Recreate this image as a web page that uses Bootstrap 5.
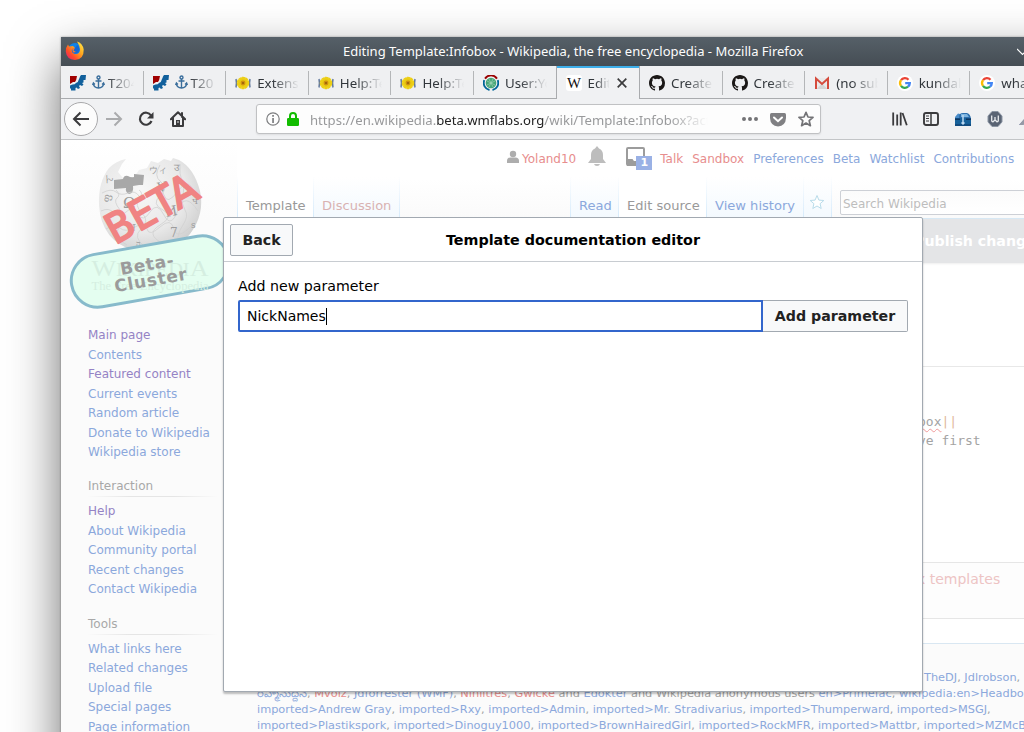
<!DOCTYPE html>
<html lang="en">
<head>
<meta charset="utf-8">
<title>Editing Template:Infobox - Wikipedia, the free encyclopedia</title>
<link rel="stylesheet" href="https://cdn.jsdelivr.net/npm/bootstrap@5.3.0/dist/css/bootstrap.min.css">
<style>
body{width:1024px;height:732px;overflow:hidden;background:#fff;padding:37px 0 0 61px;font-family:"DejaVu Sans",sans-serif;font-size:12px;line-height:1.2;color:#a0a0a0}
svg{display:block;flex:none}
.win{width:1100px;height:900px;background:#fff;box-shadow:0 22px 48px 0 rgba(0,0,0,.58),0 0 2px rgba(0,0,0,.35)}
.chrome{font-family:"Noto Sans",sans-serif;font-size:13.33px;color:#31363b;white-space:nowrap}
.titlebar{height:29px;background:linear-gradient(#566068,#454d54);color:#fcfcfc;padding-left:4px}
.titletext{width:460px;margin:0 0 0 258px;font-size:13px}
.tabstrip{height:33px;background:#eff0f2}
.btab{width:82.6px;flex:none;border-bottom:1px solid #a9abae;padding:1px 0 0 9px;position:relative}
.btab:not(.on):after{content:"";position:absolute;right:0;top:5px;height:24px;width:1px;background:#b4b6b8}
.btab.on:after,.btab.pre:after{display:none}
.btab.on{border:1px solid #a9abae;border-width:0 1px;box-shadow:inset 0 2px #3daee9;background:#f0f1f3;padding-left:9px;width:84.4px;margin-left:-1px}
.btxt{margin-left:6px;width:43px;overflow:hidden;-webkit-mask-image:linear-gradient(90deg,#000 35%,transparent 98%);mask-image:linear-gradient(90deg,#000 35%,transparent 98%)}
.toolbar{height:41px;background:#f0f1f3;border-bottom:1px solid #c3c5c7;padding-left:3px}
.backbtn{width:34px;height:34px;border:1px solid #a9a9ab;border-radius:50%;background:#fcfcfc}
.urlbar{width:565px;height:30px;margin-left:70px;background:#fdfdfd;border:1px solid #c0c1c3;border-radius:3px;padding-left:9px;box-shadow:0 1px 2px rgba(0,0,0,.08)}
.urltext{width:398px;margin:3px 0 0 11px;font-size:13.13px;overflow:hidden;color:#98999b;-webkit-mask-image:linear-gradient(90deg,#000 90%,transparent);mask-image:linear-gradient(90deg,#000 90%,transparent)}
.urltext b{font-weight:400;color:#222}
.wiki{height:760px;background:#fbfbfb}
.side{width:176px;flex:none;background:linear-gradient(#fff,#fbfbfb 80px)}
.side ul{list-style:none;margin:0 0 0 27px;padding:0}
.side li{height:19.5px;line-height:19.5px;white-space:nowrap;color:#8ba8dc}
.side li.vis{color:#9583c5}
.side h3{font-size:12px;font-weight:400;margin:13px 20px 5.5px 27px;height:21px;line-height:21px;border-bottom:1px solid;border-image:linear-gradient(90deg,#fbfbfb,#e5e5e5 33%,#e5e5e5 66%,#fbfbfb) 1;color:#a8a8a8}
.pagehead{height:78px;background:linear-gradient(#fff 50%,#fafafa)}
.personal{height:37px;padding:1px 0 0 269px;white-space:nowrap;color:#8ba8dc}
.red{color:#e78d8d!important}.pred{color:#d9b2b2!important}.grey{color:#999!important}
.counter{position:absolute;left:10px;top:9px;width:16px;height:14px;background:#9ab1e5;color:#fff;font-weight:700;font-size:11px;line-height:14px;text-align:center}
.vtabs{height:41px;font-size:13.05px;color:#8ba8dc;white-space:nowrap}
.vtab{height:41px;padding:21px 0 0 8px;border-right:1px solid;border-image:linear-gradient(#fff,#d5eafb) 1;background:linear-gradient(#fff,#f3f9fe)}
.vtab.sel{background:linear-gradient(#fff,#fff)}
.search{width:220px;height:25px;border:1px solid #cdd0d6;border-radius:2px;margin:13px 0 0 8px;padding-left:2px;font-size:12px;line-height:26px;color:#bdbdbd;background:linear-gradient(#fbfbfb,#fff)}
.content{height:426px;background:#fff;border-top:1px solid #d6e8f5;border-bottom:1px solid #d9e7f2}
.savebar{height:44px;background:#e4e5e7;color:#fff;font-size:14.2px;font-weight:700;padding-left:677px;line-height:44px;white-space:nowrap;box-shadow:0 1px 2px #eee}
.summaryrow{height:104px;border-bottom:1px solid #e8e8e8}
.code{height:196px;border-bottom:1px solid #e6e6e6;padding:45px 0 0 681px;font:13px/19px "DejaVu Sans Mono",monospace;color:#a3a3a3}
.squig{text-decoration:underline wavy #f09a9a 1px;text-underline-offset:2px}
.tmpl{height:56px;background:#fdfdfd;border-bottom:1px solid #e6e6e6;padding:8px 0 0 680px;font-size:14px;color:#edc4c4}
.foot{padding:25px 0 0 20px;font-size:11.33px;line-height:16px;color:#8ba8dc;white-space:nowrap}
.foot i{font-style:normal;color:#a0a0a0}
.dlg{position:absolute;left:223px;top:217px;width:700px;height:475px;background:#fff;border:1px solid #a2a9b1;border-radius:2px;box-shadow:0 2px 2px rgba(0,0,0,.25);color:#000;font-size:14.2px}
.dlghead{height:44px;border-bottom:1px solid #c8ccd1;padding:0 6px}
.dlgtitle{padding:2px 63px 0 0;font-size:14.3px}
.obtn{height:32px;border:1px solid #a2a9b1;border-radius:2px;background:#f8f9fa;color:#222;font-size:14.2px;font-weight:700;line-height:30px;text-align:center;padding:0}
.field{width:525px;height:32px;border:2px solid #36c;border-radius:2px 0 0 2px;padding-left:7px;line-height:28px;font-size:14px}
.caret{width:1px;height:17px;background:#000}
</style>
</head>
<body>
<svg width="0" height="0" style="position:absolute">
<defs>
<g id="cog"><path d="M0 1h7Q6.500 5 5 7H3L0 9z" fill="#a00000"/><path d="M16 0 15.500 5H13.500V7.500L12 8 13.500 9.500 12 11 10 10 9 11 10 13 8 14 6.500 12.500 5.500 13V15.500H1V13.500H0V10.500L2.500 9.500Q5 9.500 6 8 8.500 7 9 4 9.500 3 10 1.500L11 0z" fill="#11609c"/></g>
<g id="flower"><path d="M1 4Q2 8 1 12.500M15 4Q14 8 15 12.500" stroke="#61789d" stroke-width="1.500" fill="none"/><circle cx="8" cy="8" r="5" fill="#e8c812"/><circle cx="8" cy="8" r="5" fill="none" stroke="#edcf16" stroke-width="2.500" stroke-dasharray="2.900 .25"/><circle cx="8" cy="8" r="2.400" fill="#d0900f"/><circle cx="8" cy="8" r="1" fill="#905c08"/></g>
<path id="octo" fill="#1b1817" d="M8 0C3.580 0 0 3.580 0 8c0 3.540 2.290 6.530 5.470 7.590.4.070.55-.17.55-.38v-1.490c-2.010.37-2.530-.49-2.690-.94-.09-.23-.48-.94-.82-1.130-.28-.15-.68-.52-.01-.53.63-.01 1.080.58 1.230.82.72 1.210 1.870.87 2.330.66.07-.52.28-.87.51-1.070-1.780-.2-3.640-.89-3.640-3.950 0-.87.31-1.590.82-2.150-.08-.2-.36-1.020.08-2.120 0 0 .67-.21 2.200.82a7.600 7.600 0 0 1 4 0c1.530-1.040 2.200-.82 2.200-.82.44 1.100.16 1.920.08 2.120.51.56.82 1.270.82 2.150 0 3.070-1.870 3.750-3.650 3.950.29.25.54.73.54 1.480v2.200c0 .21.15.46.55.38A8 8 0 0 0 16 8c0-4.420-3.580-8-8-8z"/>
<g id="goog"><circle cx="8" cy="8" r="8" fill="#fff"/><g fill="none" stroke-width="2.300"><path d="M4 5.200A4.800 4.800 0 0 1 11.500 4.700" stroke="#ea4335"/><path d="M4 5.200A4.800 4.800 0 0 0 4 10.800" stroke="#fbbc05"/><path d="M4 10.800A4.800 4.800 0 0 0 11 11.700" stroke="#34a853"/><path d="M11 11.700A4.800 4.800 0 0 0 12.800 8.100H8.200" stroke="#4285f4"/></g></g>
<g id="anchor" fill="none" stroke="#3a6e9c" stroke-width="1.400"><circle cx="6.500" cy="2.500" r="1.500"/><path d="M6.500 4V13M3.500 6h6M1.300 8.500Q1.800 12.700 6.500 13 11.200 12.700 11.700 8.500M.5 10 1.400 8l1.500 1.600M12.500 10 11.600 8l-1.500 1.600"/></g>
</defs></svg>
<div class="win">
 <div class="chrome">
  <div class="titlebar d-flex align-items-center">
   <svg width="20" height="20" viewBox="0 0 20 20" style="margin-top:-2px"><defs><linearGradient id="fx" x1="1" y1="0" x2="0" y2="1"><stop offset="0" stop-color="#fff44f"/><stop offset=".4" stop-color="#ffa61e"/><stop offset=".7" stop-color="#ff4b28"/><stop offset="1" stop-color="#e31587"/></linearGradient></defs><circle cx="10" cy="9" r="7" fill="#1183e8"/><path d="M12 .5Q17.500 2 18.700 8.500 19 18.500 10 19 1.500 18.500 .8 10.500.8 6 3 3.500L4 5.500 8 5 10 7 7.500 9Q7 13 11 13 14.500 13 15 9 15 5 12 .5z" fill="url(#fx)"/><path d="M7 8Q6 12 9.500 12.500 14 12.500 14.500 8 14 5 12 4 11 7 7 8z" fill="#1767d2"/><path d="M7 7.500 10 7 8.500 9.500 11 11 8 11.500z" fill="#ff7a24"/></svg>
   <div class="titletext">Editing Template:Infobox - Wikipedia, the free encyclopedia - Mozilla Firefox</div>
   <svg width="12" height="8" style="margin-left:214px"><path d="M0 1 5.500 6.500 11 1" fill="none" stroke="#fcfcfc" stroke-width="1.200"/></svg>
  </div>
  <div class="tabstrip d-flex">
   <div class="btab d-flex align-items-center"><svg width="16" height="16"><use href="#cog"/></svg><div class="btxt d-flex align-items-center"><svg width="13" height="14" style="margin-right:3px"><use href="#anchor"/></svg>T204</div></div>
   <div class="btab d-flex align-items-center"><svg width="16" height="16"><use href="#cog"/></svg><div class="btxt d-flex align-items-center"><svg width="13" height="14" style="margin-right:3px"><use href="#anchor"/></svg>T20</div></div>
   <div class="btab d-flex align-items-center"><svg width="16" height="16"><use href="#flower"/></svg><div class="btxt">Extensi</div></div>
   <div class="btab d-flex align-items-center"><svg width="16" height="16"><use href="#flower"/></svg><div class="btxt">Help:Te</div></div>
   <div class="btab d-flex align-items-center"><svg width="16" height="16"><use href="#flower"/></svg><div class="btxt">Help:Te</div></div>
   <div class="btab pre d-flex align-items-center"><svg width="16" height="16"><circle cx="8" cy="8" r="5.300" fill="#48a678"/><path d="M4 6l8 4M4 10l8-4M6 4l4 8M10 4 6 12" stroke="#a9d8bd" stroke-width=".6"/><path d="M2 3.600A7.200 7.200 0 0 1 14 3.600" fill="none" stroke="#990000" stroke-width="1.900"/><path d="M1.300 5.200A7.200 7.200 0 0 0 6.500 15M14.700 5.200A7.200 7.200 0 0 1 9.500 15" fill="none" stroke="#006699" stroke-width="1.900"/></svg><div class="btxt">User:Yo</div></div>
   <div class="btab on d-flex align-items-center"><svg width="16" height="16"><rect width="16" height="16" rx="3" fill="#fff"/><text x="8" y="13" text-anchor="middle" textLength="14" lengthAdjust="spacingAndGlyphs" font-family="Liberation Serif" font-size="14" fill="#111">W</text></svg><div class="btxt" style="width:22px">Editin</div><svg width="10" height="10" style="margin-left:7px"><path d="M.7.700 9.300 9.300M9.300.700.700 9.300" stroke="#3b3b3d" stroke-width="1.700"/></svg></div>
   <div class="btab d-flex align-items-center"><svg width="16" height="16"><use href="#octo"/></svg><div class="btxt">Create</div></div>
   <div class="btab d-flex align-items-center"><svg width="16" height="16"><use href="#octo"/></svg><div class="btxt">Create</div></div>
   <div class="btab d-flex align-items-center"><svg width="16" height="16"><path d="M1 3h14v11H1z" fill="#eaeaea"/><path d="M2.500 14 8 8.500 13.500 14z" fill="#d5d5d5"/><path d="M2 14V3.500L8 9l6-5.500V14" fill="none" stroke="#d54b3d" stroke-width="2"/></svg><div class="btxt">(no sub</div></div>
   <div class="btab d-flex align-items-center"><svg width="16" height="16"><use href="#goog"/></svg><div class="btxt">kundal</div></div>
   <div class="btab d-flex align-items-center"><svg width="16" height="16"><use href="#goog"/></svg><div class="btxt">what i</div></div>
   <div class="btab"></div>
  </div>
  <div class="toolbar d-flex align-items-center">
   <div class="backbtn d-flex align-items-center justify-content-center"><svg width="18" height="16"><path d="M17 8H2M8.500 1.500 2 8l6.500 6.500" fill="none" stroke="#3b3b3d" stroke-width="2"/></svg></div>
   <svg width="17" height="16" style="margin-left:8px"><path d="M0 8h15M8.500 1.500 15 8l-6.500 6.500" fill="none" stroke="#aaabad" stroke-width="2"/></svg>
   <svg width="16" height="16" style="margin-left:15px"><path d="M13 4.500A6 6 0 1 0 13.500 10" fill="none" stroke="#3b3b3d" stroke-width="2.200"/><path d="M15.500 1v6.500H9z" fill="#3b3b3d"/></svg>
   <svg width="16" height="16" style="margin-left:16px"><path d="M.8 8.300 8 1.200l7.200 7.100M3 7v8h10V7M12 2v4" fill="none" stroke="#3b3b3d" stroke-width="2" stroke-linejoin="round" stroke-linecap="round"/><path d="M6 9h4v6H6z" fill="#3b3b3d"/><circle cx="8" cy="11" r=".8" fill="#fff"/></svg>
   <div class="urlbar d-flex align-items-center">
    <svg width="14" height="14"><circle cx="7" cy="7" r="6.200" fill="none" stroke="#7c7d7f" stroke-width="1.200"/><path d="M6.200 6h1.700v5H6.200zM6.200 3h1.700v1.700H6.200z" fill="#7c7d7f"/></svg>
    <svg width="12" height="14" style="margin-left:7px"><path d="M3 7V4Q3 1 6 1T9 4V7" fill="none" stroke="#12bc00" stroke-width="2"/><rect y="6" width="12" height="8" rx="1.200" fill="#12bc00"/></svg>
    <div class="urltext">https://en.wikipedia.<b>beta.wmflabs.org</b>/wiki/Template:Infobox?action</div>
    <svg width="16" height="6" style="margin-left:34px"><path d="M0 3a2 2 0 1 0 4 0a2 2 0 1 0-4 0M6 3a2 2 0 1 0 4 0a2 2 0 1 0-4 0M12 3a2 2 0 1 0 4 0a2 2 0 1 0-4 0" fill="#737376"/></svg>
    <svg width="16" height="15" style="margin-left:12px"><path d="M1.500 1h13Q16 1 16 2.500V6Q15.500 14 8 14.500.5 14 0 6V2.500Q0 1 1.500 1z" fill="#808083"/><path d="M4 5.500 8 9.200l4-3.700" fill="none" stroke="#fff" stroke-width="2" stroke-linecap="round"/></svg>
    <svg width="16" height="16" style="margin-left:12px"><path d="M8 1.300l2 4.700 5 .4-3.800 3.300 1.200 5L8 12l-4.400 2.700 1.200-5L1 6.400 6 6z" fill="none" stroke="#737376" stroke-width="1.700" stroke-linejoin="round"/></svg>
   </div>
   <svg width="16" height="16" style="margin-left:71px"><path d="M1.200 1.500v13M5.200 3.500v11M8.700 1.500v13M10.500 2l4.300 12.300" fill="none" stroke="#3b3b3d" stroke-width="1.800"/></svg>
   <svg width="16" height="16" style="margin-left:15px"><rect x="1" y="2" width="14" height="12" rx="2" fill="none" stroke="#3b3b3d" stroke-width="1.900"/><path d="M8 2v12" stroke="#3b3b3d" stroke-width="1.500"/><path d="M3 5h3M3 7.500h3M3 10h3" stroke="#3b3b3d"/></svg>
   <svg width="16" height="16" style="margin-left:16px"><path d="M0 6 3 2.500 5 3V7H0z" fill="#4a8cc9"/><path d="M4 6Q4 2 8 2h4q3.500 1 4 6H4z" fill="#2d6fae"/><path d="M6 3h6l2 3H6z" fill="#7db4df"/><path d="M0 7h16v8H0z" fill="#17619a"/><path d="M0 7.500h5v1.500H0zM11 7.500h5v1.500h-5z" fill="#0d3560"/><path d="M0 13h16v2H0z" fill="#124c80"/><path d="M8 4v9M6.500 11.500 8 13l1.500-1.500" stroke="#bcd9f2" stroke-width="1.500" fill="none"/></svg>
   <svg width="16" height="16" style="margin-left:16px"><path d="M5 .5h6L15 5v6l-4 4.500H5L1 11V5z" fill="#5a6474" stroke="#8b95a3"/><path d="M4.700 4.500V9.500q0 1.300 1.300 1.300L8 9V6v3l2 1.800q1.300 0 1.300-1.300V4.500" fill="none" stroke="#e8ebee" stroke-width="1.300"/></svg>
   <svg width="16" height="16" style="margin-left:16px"><path d="M0 14 11 2l3 3L4 14z" fill="#6c74b0"/><path d="M0 14l5-6 3 3-4 3z" fill="#969aa6"/></svg>
  </div>
 </div>
 <div class="wiki d-flex">
  <div class="side">
   <svg width="176" height="186" viewBox="61 140 176 186">
    <defs><radialGradient id="gl" cx=".4" cy=".35" r=".7"><stop offset="0" stop-color="#f7f7f7"/><stop offset=".65" stop-color="#e8e8e8"/><stop offset="1" stop-color="#cdcdcd"/></radialGradient></defs>
    <path d="M126 159Q116 161 109 168 98 182 99 205 101 241 135 251 173 256 190 234 205 214 200 191 194 168 179 160L173 158 171 161 164 159 158 163 151 161 147 168 139 170 134 177 123 178 118 172 122 164z" fill="url(#gl)"/>
    <path d="M114 180l9-1q1-4 5-3 3 2 6 1v-3l10 1-1 10h-4l-6 1q1 7-4 8-4-2-3-6l-12 1z" fill="#a8a8a8"/>
    <g fill="none" stroke="#d0d0d0" stroke-width=".8"><path d="M102 193q9-5 14-1t12 1 11 3 13-3 12 2 14-4 16 2M101 211q8-4 13 2t12-1 12 2 12-2 14 3 14-5 20 1M106 229q9-6 14-1t15-1 12 2 13-2 14 2 18-4M116 190q5 5 1 8t3 12-1 18 8 17M139 190q5 3 0 9t3 14-1 16 4 18M160 165q-7 11 1 17t-1 14 3 14-3 15 2 18M180 164q-1 10 2 17t1 15 2 14-2 15-5 16"/></g>
    <g font-family="DejaVu Serif,serif" fill="#9c9c9c"><text x="123" y="208" font-size="15">Ω</text><text x="158" y="192" font-size="13" transform="rotate(-8 158 192)">V</text><text x="166" y="217" font-size="14" transform="rotate(-10 166 217)">И</text><text x="170" y="237" font-size="12">7</text><text x="102" y="202" font-size="10" transform="rotate(-80 106 198)">ფ</text><text x="106" y="183" font-size="9" transform="rotate(-30 106 183)">ん</text><text x="149" y="173" font-size="9">ウィ</text><text x="174" y="171" font-size="10">उ</text><text x="192" y="204" font-size="9">ч</text><text x="191" y="228" font-size="9">s</text><text x="127" y="231" font-size="11">अ</text><text x="136" y="246" font-size="8">ה</text></g>
    <text transform="translate(115 245) rotate(-29)" font-family="DejaVu Sans,sans-serif" font-size="41" textLength="99" lengthAdjust="spacingAndGlyphs" fill="#f08383" stroke="#f08383" stroke-width="2" stroke-linejoin="round">BETA</text>
    <rect x="70.500" y="245" width="159" height="53" rx="26.500" transform="rotate(-10 150 271.500)" fill="#e4fef0" stroke="#87bacb" stroke-width="3"/>
    <g font-family="Liberation Serif,serif" fill="#d5eee1" text-anchor="middle"><text x="150" y="276" font-size="23" textLength="117" lengthAdjust="spacingAndGlyphs">W<tspan font-size="18">IKIPEDI</tspan>A</text><text x="150" y="290" font-size="12" textLength="117" lengthAdjust="spacingAndGlyphs">The Free Encyclopedia</text></g>
    <g transform="rotate(-10 150 271.500)" font-family="DejaVu Sans,sans-serif" font-weight="700" font-size="17" fill="#9b9b9b" text-anchor="middle"><text x="148" y="270" textLength="54">Beta-</text><text x="149" y="286" textLength="73">Cluster</text></g>
   </svg>
   <ul><li class="vis">Main page</li><li>Contents</li><li class="vis">Featured content</li><li>Current events</li><li>Random article</li><li>Donate to Wikipedia</li><li>Wikipedia store</li></ul>
   <h3>Interaction</h3>
   <ul><li class="vis">Help</li><li>About Wikipedia</li><li>Community portal</li><li>Recent changes</li><li>Contact Wikipedia</li></ul>
   <h3 style="margin-top:14.5px;margin-bottom:4.5px">Tools</h3>
   <ul><li>What links here</li><li>Related changes</li><li>Upload file</li><li>Special pages</li><li>Page information</li></ul>
  </div>
  <div class="flex-grow-1">
   <div class="pagehead">
    <div class="personal d-flex align-items-center">
     <svg width="14" height="14" style="margin-top:-5px"><circle cx="7" cy="4" r="3.200" fill="#adadad"/><path d="M1 13V11Q1 7.500 4.500 7.500h5Q13 7.500 13 11v2z" fill="#adadad"/></svg>
     <span class="red" style="margin-left:2px">Yoland10</span>
     <svg width="18" height="21" style="margin-left:12px;margin-top:-6px"><path d="M9 0l2 2.500Q15 4 15 9v4l3 4H0l3-4V9Q3 4 7 2.500z" fill="#bdbdbd"/><path d="M6 18h6q-.5 2-3 2t-3-2z" fill="#bdbdbd"/></svg>
     <div class="position-relative" style="width:26px;height:24px;margin:0 8px 0 20px"><svg width="20" height="20"><path d="M1 13V2Q1 1 2 1H17Q18 1 18 2V17Q18 18 17 18H2Q1 18 1 17V13H6L7.500 15H12" fill="none" stroke="#9c9c9c" stroke-width="2"/><path d="M1 13h5l2 3h5v3H1z" fill="#9c9c9c"/></svg><span class="counter">1</span></div>
     <span class="red">Talk</span><span class="red" style="margin-left:9px">Sandbox</span><span style="margin-left:9px">Preferences</span><span style="margin-left:9px">Beta</span><span style="margin-left:9px">Watchlist</span><span style="margin-left:9px">Contributions</span>
    </div>
    <div class="vtabs d-flex">
     <div class="vtab sel p-0" style="width:1px"></div><div class="vtab sel grey" style="width:76px">Template</div><div class="vtab pred" style="width:86px">Discussion</div>
     <div class="vtab" style="width:171px;background:none"></div>
     <div class="vtab" style="width:48px">Read</div><div class="vtab sel grey" style="width:88px">Edit source</div><div class="vtab" style="width:97px">View history</div>
     <div class="vtab" style="width:28px;padding:17px 0 0 5px"><svg width="16" height="16"><path d="M8 1.500l1.900 4.600 4.900.4-3.700 3.200 1.100 4.800L8 12l-4.200 2.500 1.100-4.800-3.700-3.200 4.900-.4z" fill="#fff" stroke="#b9dcea"/></svg></div>
     <div class="search">Search Wikipedia</div>
    </div>
   </div>
   <div class="content">
    <div class="savebar">Publish changes…</div>
    <div class="summaryrow"></div>
    <div class="code"><span class="squig">box</span><span style="color:#dfb79b">||</span><br>ve first</div>
    <div class="tmpl">x templates</div>
   </div>
   <div class="foot">
    <div style="padding-left:667px">TheDJ<i>,</i> Jdlrobson<i>,</i></div>
    <div>రహ్మానుద్దీన్<i>,</i> <span class="red">Mvolz</span><i>,</i> Jdforrester (WMF)<i>,</i> <span class="red">Nihiltres</span><i>,</i> <span class="red">Gwicke</span> <i>and</i> Edokter <i>and Wikipedia anonymous users</i> en&gt;Primefac<i>,</i> wikipedia:en&gt;Headbomb<i>,</i></div>
    <div>imported&gt;Andrew Gray<i>,</i> imported&gt;Rxy<i>,</i> imported&gt;Admin<i>,</i> imported&gt;Mr. Stradivarius<i>,</i> imported&gt;Thumperward<i>,</i> imported&gt;MSGJ<i>,</i></div>
    <div>imported&gt;Plastikspork<i>,</i> imported&gt;Dinoguy1000<i>,</i> imported&gt;BrownHairedGirl<i>,</i> imported&gt;RockMFR<i>,</i> imported&gt;Mattbr<i>,</i> imported&gt;MZMcBride<i>,</i></div>
   </div>
  </div>
 </div>
</div>
<div class="dlg">
 <div class="dlghead d-flex align-items-center">
  <button class="obtn" style="width:63px">Back</button>
  <div class="dlgtitle fw-bold flex-grow-1 text-center">Template documentation editor</div>
 </div>
 <div style="padding:16px 14px">
  <div style="height:22px;line-height:17px">Add new parameter</div>
  <div class="d-flex">
   <div class="field d-flex align-items-center">NickNames<span class="caret"></span></div>
   <button class="obtn border-start-0 rounded-start-0" style="width:145px">Add parameter</button>
  </div>
 </div>
</div>
<script src="https://cdn.jsdelivr.net/npm/bootstrap@5.3.0/dist/js/bootstrap.bundle.min.js"></script>
</body>
</html>
